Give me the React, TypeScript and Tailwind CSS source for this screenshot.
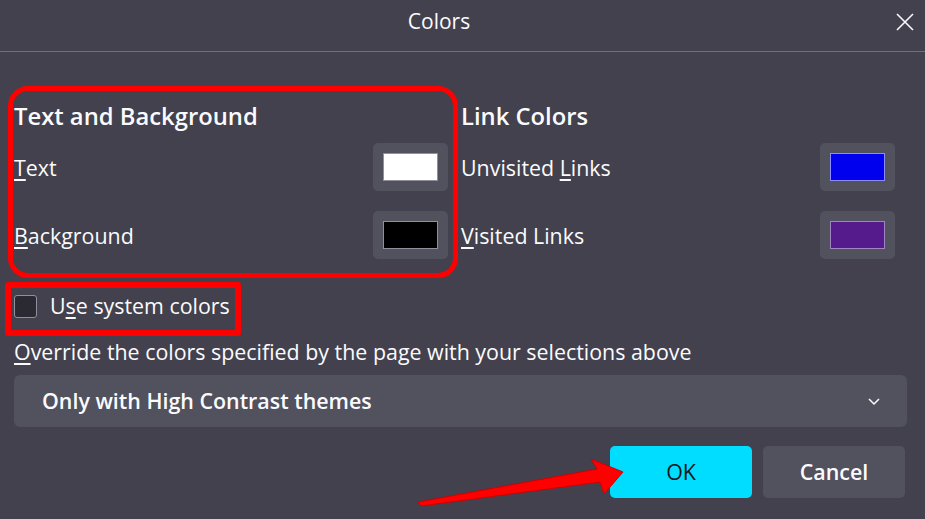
import React from "react";

function Swatch({ color, border }: { color: string; border: string }) {
  return (
    <div className="w-[75px] h-[48px] rounded-[5px] bg-[#52515e] flex items-center justify-center">
      <div className="w-[55px] h-[28px] border" style={{ background: color, borderColor: border }} />
    </div>
  );
}

export default function App() {
  return (
    <div
      className="relative w-[925px] h-[519px] bg-[#42414d] text-[#fbfbfe] overflow-hidden"
      style={{ fontFamily: '"Open Sans", "Noto Sans", sans-serif' }}
    >
      {/* header */}
      <div className="relative h-[52px] border-b border-[#706f7a] flex items-center justify-center pb-[7px] pr-[47px]">
        <span className="text-[21px] font-medium">Colors</span>
        <svg className="absolute right-[11px] top-[13px]" width="18" height="18" viewBox="0 0 18 18">
          <path d="M1 1 L17 17 M17 1 L1 17" stroke="#fbfbfe" strokeWidth="1.6" />
        </svg>
      </div>

      <div className="px-[14px]">
        {/* two columns */}
        <div className="flex gap-[13px] pt-[50px]">
          <div className="w-[434px] flex flex-col">
            <div className="h-[28px] leading-[28px] text-[23.8px] font-semibold">Text and Background</div>
            <div className="mt-[13px] h-[48px] flex items-center justify-between">
              <span className="text-[21.4px] pt-[2px]"><span className="underline underline-offset-[3px]">T</span>ext</span>
              <Swatch color="#ffffff" border="#8f8f9d" />
            </div>
            <div className="mt-[20px] h-[48px] flex items-center justify-between">
              <span className="text-[21.4px] pt-[2px]"><span className="underline underline-offset-[3px]">B</span>ackground</span>
              <Swatch color="#000000" border="#8f8f9d" />
            </div>
          </div>
          <div className="w-[434px] flex flex-col">
            <div className="h-[28px] leading-[28px] text-[23.8px] font-semibold">Link Colors</div>
            <div className="mt-[13px] h-[48px] flex items-center justify-between">
              <span className="text-[21.4px] pt-[2px]">Unvisited <span className="underline underline-offset-[3px]">L</span>inks</span>
              <Swatch color="#0000ee" border="#8c8cff" />
            </div>
            <div className="mt-[20px] h-[48px] flex items-center justify-between">
              <span className="text-[21.4px] pt-[2px]"><span className="underline underline-offset-[3px]">V</span>isited Links</span>
              <Swatch color="#551a8b" border="#9f86c0" />
            </div>
          </div>
        </div>

        {/* checkbox row */}
        <div className="mt-[32px] h-[30px] flex items-center gap-[13px]">
          <div className="w-[23px] h-[23px] rounded-[3px] bg-[#2b2a33] border border-[#8f8f9d]" />
          <span className="text-[21.4px]">U<span className="underline underline-offset-[3px]">s</span>e system colors</span>
        </div>

        <div className="mt-[17px] h-[28px] leading-[28px] text-[21.4px] whitespace-nowrap">
          <span className="underline underline-offset-[3px]">O</span>verride the colors specified by the page with your selections above
        </div>

        {/* dropdown */}
        <div className="mt-[9px] h-[52px] w-[893px] rounded-[6px] bg-[#52515e] flex items-center justify-between pl-[28px] pr-[26px]">
          <span className="text-[21.4px] font-semibold">Only with High Contrast themes</span>
          <svg width="14" height="10" viewBox="0 0 14 10">
            <path d="M2 3 L7 8 L12 3" stroke="#fbfbfe" strokeWidth="1.5" fill="none" />
          </svg>
        </div>

        {/* buttons */}
        <div className="mt-[19px] flex justify-end gap-[11px] pr-[6px]">
          <div className="w-[142px] h-[52px] rounded-[5px] bg-[#00ddff] text-[#15141a] flex items-center justify-center text-[21.4px] font-medium">
            OK
          </div>
          <div className="w-[142px] h-[52px] rounded-[5px] bg-[#52515e] flex items-center justify-center text-[21.4px] font-semibold">
            Cancel
          </div>
        </div>
      </div>

      {/* annotations */}
      <div className="absolute left-[8px] top-[86px] w-[450px] h-[192px] border-[5px] border-[#ff0000] rounded-[20px] pointer-events-none" />
      <div className="absolute left-[5px] top-[282px] w-[236px] h-[54px] border-[6px] border-[#ff0000] rounded-[3px] pointer-events-none" />
      <svg className="absolute left-0 top-0 pointer-events-none" width="925" height="519" viewBox="0 0 925 519">
        <polygon
          points="418,502 597,469 591,459 623,472 604,494 600,482 421,506"
          fill="#ff0000"
          stroke="#d00000"
          strokeWidth="1"
          strokeLinejoin="round"
        />
      </svg>
    </div>
  );
}
